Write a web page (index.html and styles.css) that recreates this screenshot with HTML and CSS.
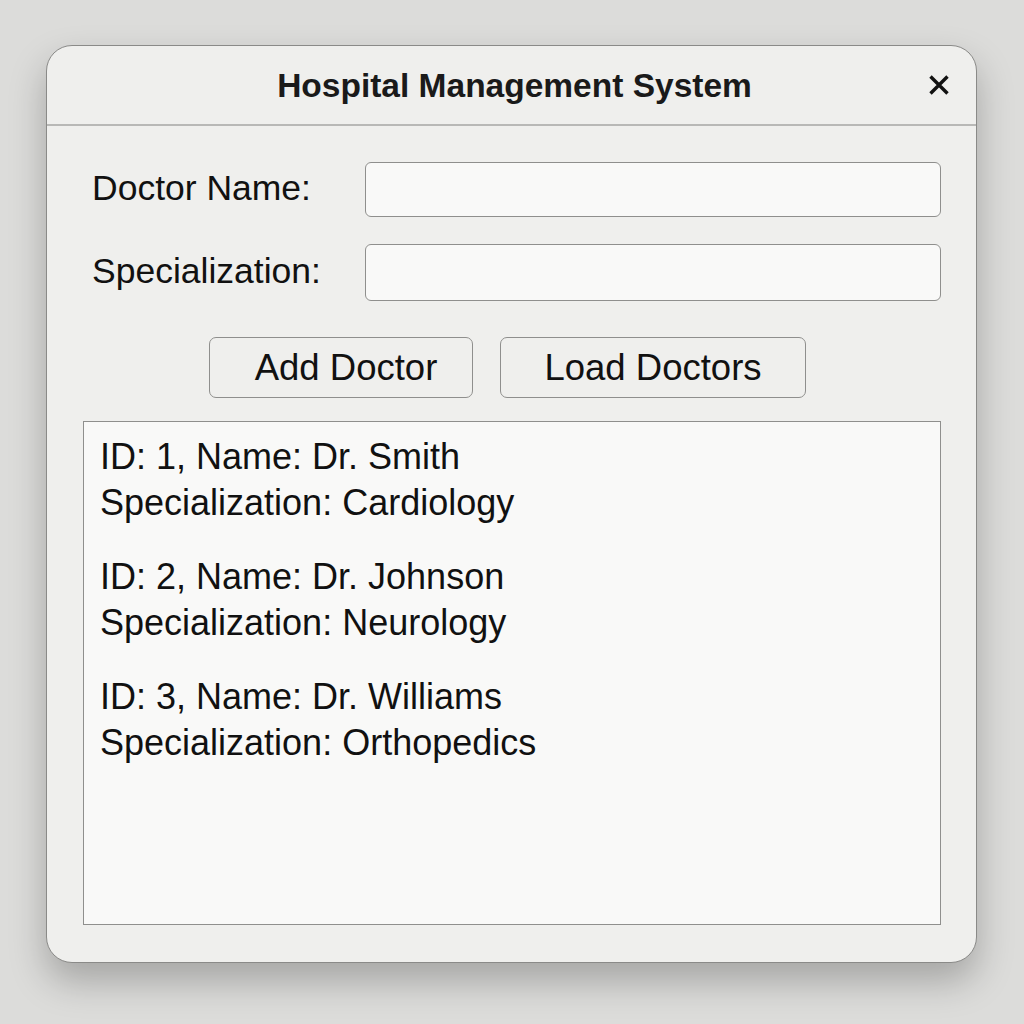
FILE: index.html
```html
<!DOCTYPE html>
<html>
<head>
<meta charset="utf-8">
<link rel="stylesheet" href="styles.css">
</head>
<body>
<div class="window">
  <div class="titlebar">
    <div class="title">Hospital Management System</div>
    <div class="close"><svg width="20" height="20" viewBox="0 0 20 20"><path d="M1.5 1.5 L18.5 18.5 M18.5 1.5 L1.5 18.5" stroke="#111" stroke-width="3.4" stroke-linecap="butt"/></svg></div>
  </div>
  <div class="content">
    <div class="form">
      <label class="label">Doctor Name:</label>
      <div class="input"></div>
      <label class="label">Specialization:</label>
      <div class="input input-2"></div>
    </div>
    <div class="buttons">
      <div class="btn btn-add">Add Doctor</div>
      <div class="btn btn-load">Load Doctors</div>
    </div>
    <div class="list">
      <div class="item"><div>ID: 1, Name: Dr. Smith</div><div>Specialization: Cardiology</div></div>
      <div class="item"><div>ID: 2, Name: Dr. Johnson</div><div>Specialization: Neurology</div></div>
      <div class="item"><div>ID: 3, Name: Dr. Williams</div><div>Specialization: Orthopedics</div></div>
    </div>
  </div>
</div>
</body>
</html>
```
FILE: styles.css
```css
html, body {
  margin: 0;
  padding: 0;
}
body {
  width: 1024px;
  height: 1024px;
  background: #dcdcda;
  font-family: "Liberation Sans", Arial, sans-serif;
  color: #111;
  overflow: hidden;
}
.window {
  margin: 45px 0 0 46px;
  width: 929px;
  height: 916px;
  background: #efefed;
  border: 1px solid #8a8a88;
  border-radius: 26px;
  box-shadow: 0 18px 36px rgba(0,0,0,0.25);
  display: flex;
  flex-direction: column;
  overflow: hidden;
}
.titlebar {
  height: 78px;
  border-bottom: 2px solid #b8b8b6;
  display: flex;
  align-items: center;
  justify-content: center;
  position: relative;
}
.title {
  font-weight: bold;
  font-size: 33.5px;
  margin-top: 2px;
  margin-left: 6px;
  color: #1a1a1a;
}
.close {
  position: absolute;
  right: 27px;
  top: 29px;
  width: 20px;
  height: 20px;
}
.content {
  padding: 36px 35px 0 36px;
  display: flex;
  flex-direction: column;
}
.form {
  display: grid;
  grid-template-columns: 282px 576px;
  row-gap: 27px;
  align-items: center;
}
.label {
  font-size: 35.5px;
  padding-left: 9px;
  margin-top: -2px;
}
.input {
  height: 55px;
  background: #f9f9f8;
  border: 1px solid #8f8f8d;
  border-radius: 6px;
  box-sizing: border-box;
}
.input-2 { height: 57px; }
.buttons {
  display: flex;
  justify-content: flex-start;
  gap: 27px;
  margin-top: 36px;
  padding-left: 126px;
}
.btn {
  height: 61px;
  box-sizing: border-box;
  border: 1px solid #8f8f8d;
  border-radius: 7px;
  background: #efefed;
  font-size: 36.5px;
  display: flex;
  align-items: center;
  justify-content: center;
}
.btn-add { width: 264px; padding-left: 10px; }
.btn-load { width: 306px; }
.list {
  margin-top: 23px;
  height: 504px;
  box-sizing: border-box;
  background: #f9f9f8;
  border: 1px solid #8f8f8d;
  padding: 12px 16px;
  font-size: 36px;
  line-height: 46px;
}
.item {
  margin-bottom: 28px;
}
```
